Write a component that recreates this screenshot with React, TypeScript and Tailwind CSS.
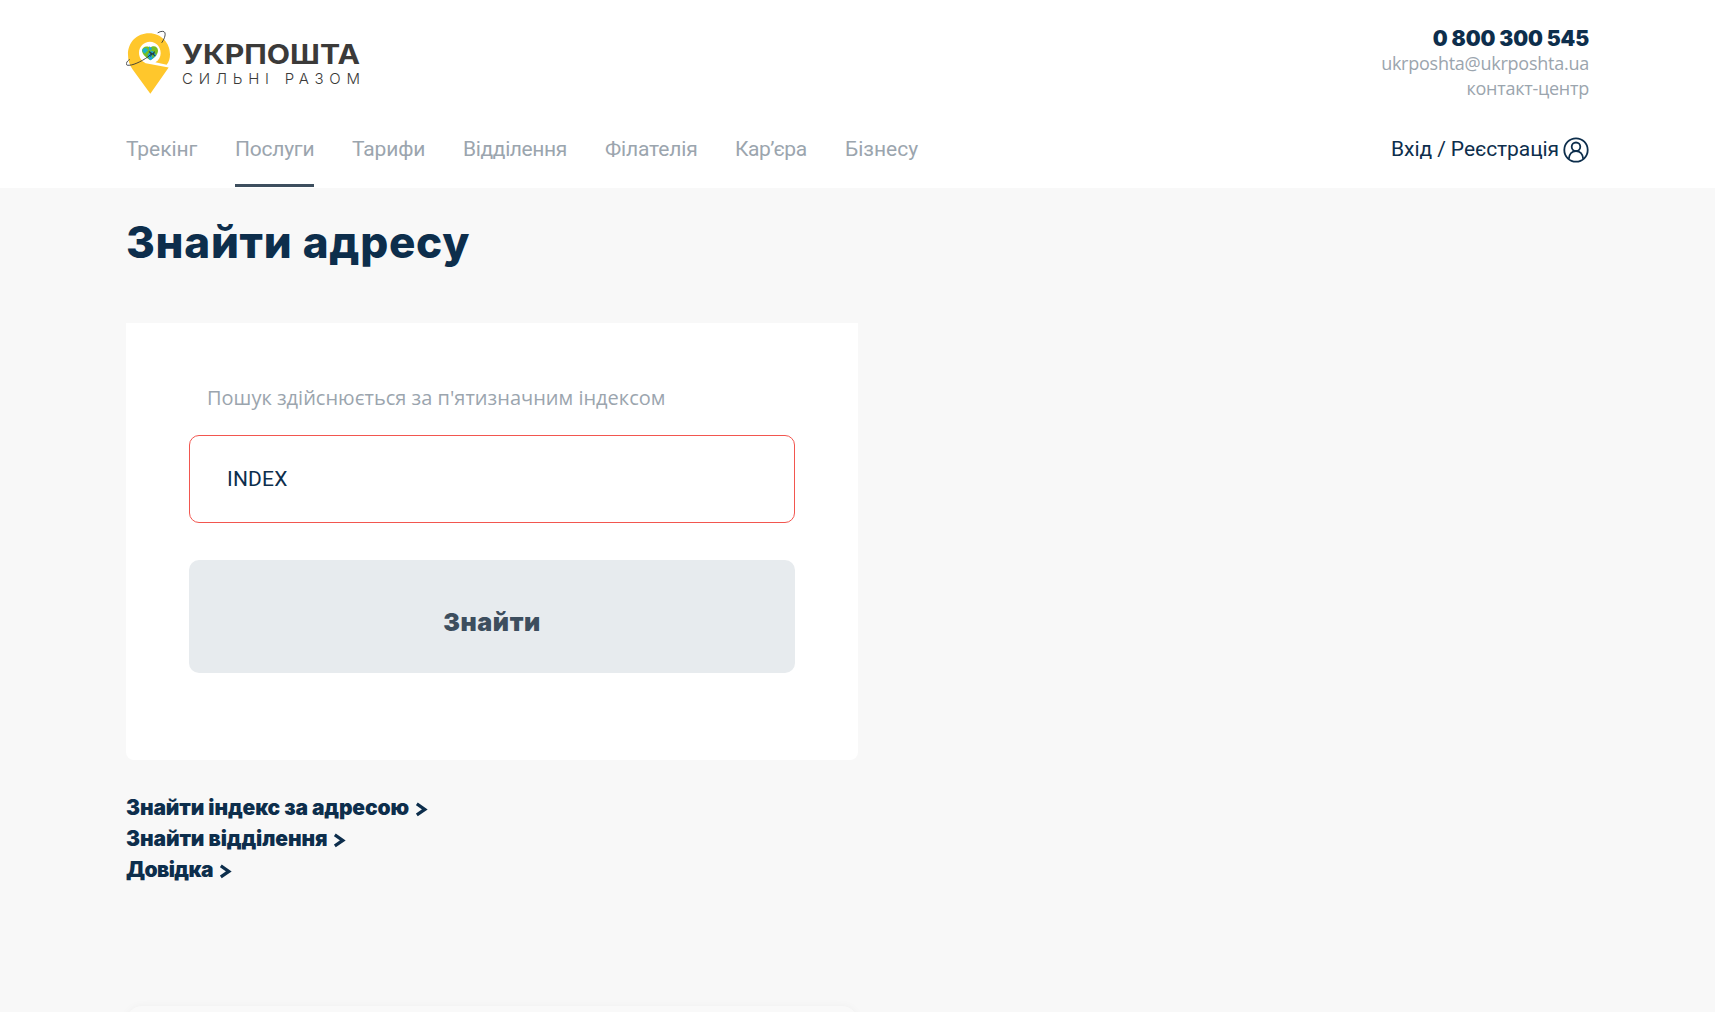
import type { ReactNode } from "react";

const navItems = [
  { label: "Трекінг", box: "w-[71px] tracking-[-0.06px]", active: false },
  { label: "Послуги", box: "w-[79px] tracking-[-0.24px]", active: true },
  { label: "Тарифи", box: "w-[73px] tracking-[-0.13px]", active: false },
  { label: "Відділення", box: "w-[104px] tracking-[-0.4px]", active: false },
  { label: "Філателія", box: "w-[92px] tracking-[-0.15px]", active: false },
  { label: "Кар’єра", box: "w-[72px] tracking-[-0.4px]", active: false },
  { label: "Бізнесу", box: "w-[73px] tracking-[0px]", active: false },
];

function Logo() {
  return (
    <svg className="block h-[65px] w-[240px]" viewBox="0 0 240 65" aria-label="Укрпошта">
      <g transform="translate(-6 -4.5) scale(0.33333)">
        <path
          d="M24 88C23 50 51 23 87 23C124 23 150 52 150 86C150 98 147 109 140 118L106 110C116 105 122 95 122 83C122 64 108 49 90 49C71 49 57 64 57 82C57 96 65 108 77 113L146 126L91 205L38 132C29 119 24 106 24 88Z"
          fill="#ffc72c"
        />
        <path d="M91 104C82 99 66 88 66 75C66 64 81 58 91 67C100 58 114 63 114 76C114 89 100 99 91 104Z" fill="#76bd22" />
        <path d="M68 71C75 65 83 67 84 75C82 79 77 78 76 84C71 83 65 77 68 71Z" fill="#19b5cb" />
        <path d="M83 86L94 76L101 79L109 89C102 97 96 101 91 104C86 101 83 96 83 86Z" fill="#1ba7d8" />
        <path d="M88 62L96 68L93 75L86 72Z" fill="#1ba7d8" />
        <path d="M97 83L103 85L101 95L96 97Z" fill="#76bd22" />
        <path d="M113 22C123 16 133 16 135 22C137 29 133 41 125 52M29 102C19 108 17 117 21 119C36 122 64 108 84 94" fill="none" stroke="#2f3338" strokeWidth="2.6" />
        <path d="M84 94L96 84" stroke="#1d3b45" strokeWidth="3" />
        <path d="M88 77L98 83L103 77L105 79L102 86L107 91L105 92L97 87L91 94L89 94L93 87L86 79Z" fill="#1d4148" />
      </g>
      <text x="56" y="34" textLength="178" lengthAdjust="spacingAndGlyphs" fill="#3b3a39" className="font-['Inter',sans-serif] text-[27px] font-bold">
        УКРПОШТА
      </text>
      <text x="56" y="54" textLength="178" fill="#3b3a39" className="font-['Inter',sans-serif] text-[15px] font-light">
        СИЛЬНІ РАЗОМ
      </text>
    </svg>
  );
}

function UserIcon() {
  return (
    <svg className="block h-[26px] w-[26px]" viewBox="0 0 26 26" fill="none" stroke="#0d2e4c" strokeWidth="1.8">
      <circle cx="13" cy="13" r="11.7" />
      <circle cx="13" cy="9.8" r="4.3" />
      <path d="M5.8 21.8C6.2 17.3 9 14 13 14C17 14 19.8 17.3 20.2 21.8" />
    </svg>
  );
}

function LinkRow({ children, className }: { children: ReactNode; className: string }) {
  return (
    <a className="flex h-[31px] items-center font-['Inter',sans-serif] text-[21px] leading-[31px] font-black text-[#0d2e4c]">
      <span className={className}>{children}</span>
      <svg className="mt-1 h-[15px] w-[12px]" viewBox="0 0 12 15" fill="none" stroke="#0d2e4c" strokeWidth="3.3">
        <path d="M0.8 1.8L8.8 7.4L0.8 13" />
      </svg>
    </a>
  );
}

export default function App() {
  return (
    <div className="h-[1012px] overflow-hidden bg-white pr-[21px]">
      <header className="h-[188px] bg-white pr-[126px] pl-[126px]">
        <div className="flex h-[134px] justify-between">
          <div className="pt-[30px]">
            <Logo />
          </div>
          <div className="pt-[26px] text-right font-['Open_Sans',sans-serif] text-[18px] leading-[25px] text-[#9ba5ae]">
            <div className="font-['Inter',sans-serif] text-[21px] font-black tracking-[-0.15px] text-[#0d2e4c]">0 800 300 545</div>
            <div className="tracking-[-0.25px]">ukrposhta@ukrposhta.ua</div>
            <div className="tracking-[-0.25px]">контакт-центр</div>
          </div>
        </div>
        <div className="flex h-[54px] justify-between">
          <nav className="flex gap-[38px] font-['Roboto',sans-serif] text-[21px] leading-[30px] whitespace-nowrap text-[#9ba5ae]">
            {navItems.map((item) => (
              <a key={item.label} className={item.box}>
                {item.label}
                {item.active && <span className="mt-5 block h-[3px] w-full bg-[#3d4e5e]" />}
              </a>
            ))}
          </nav>
          <a className="flex h-[30px] font-['Roboto',sans-serif] text-[21px] leading-[30px] tracking-[-0.08px] text-[#0d2e4c]">
            Вхід / Реєстрація
            <span className="mt-[3px] ml-1">
              <UserIcon />
            </span>
          </a>
        </div>
      </header>

      <main className="h-[824px] bg-[#f8f8f8] pt-7 pl-[126px]">
        <h1 className="h-[52px] font-['Inter',sans-serif] text-[44px] leading-[52px] font-extrabold tracking-[0.72px] text-[#0d2e4c]">
          Знайти адресу
        </h1>
        <section className="mt-[55px] h-[437px] w-[732px] rounded-b-lg bg-white px-[63px] pt-[61px]">
          <p className="pl-[18px] font-['Open_Sans',sans-serif] text-[20px] leading-[27px] text-[#9ba5ae]">
            Пошук здійснюється за п'ятизначним індексом
          </p>
          <div className="mt-6 flex h-[88px] items-center rounded-[10px] border border-[#f2564f] pt-0.5 pl-[37px] font-['Roboto',sans-serif] text-[21px] tracking-[0.2px] text-[#0d2e4c]">
            INDEX
          </div>
          <button className="mt-[37px] flex h-[113px] w-full items-center justify-center rounded-[10px] bg-[#e7ebee] pt-3 font-['Inter',sans-serif] text-[25px] font-black tracking-[0.6px] text-[#3d4e5e]">
            Знайти
          </button>
        </section>
        <div className="mt-8">
          <LinkRow className="mr-[7px] tracking-[-0.12px]">Знайти індекс за адресою</LinkRow>
          <LinkRow className="mr-[7px] tracking-[-0.1px]">Знайти відділення</LinkRow>
          <LinkRow className="mr-[7px] tracking-[-0.6px]">Довідка</LinkRow>
        </div>
        <div className="mt-[121px] h-10 w-[732px] rounded-2xl bg-[#f9f9f9] shadow-[0_0_8px_rgba(0,0,0,0.04)]" />
      </main>
    </div>
  );
}
